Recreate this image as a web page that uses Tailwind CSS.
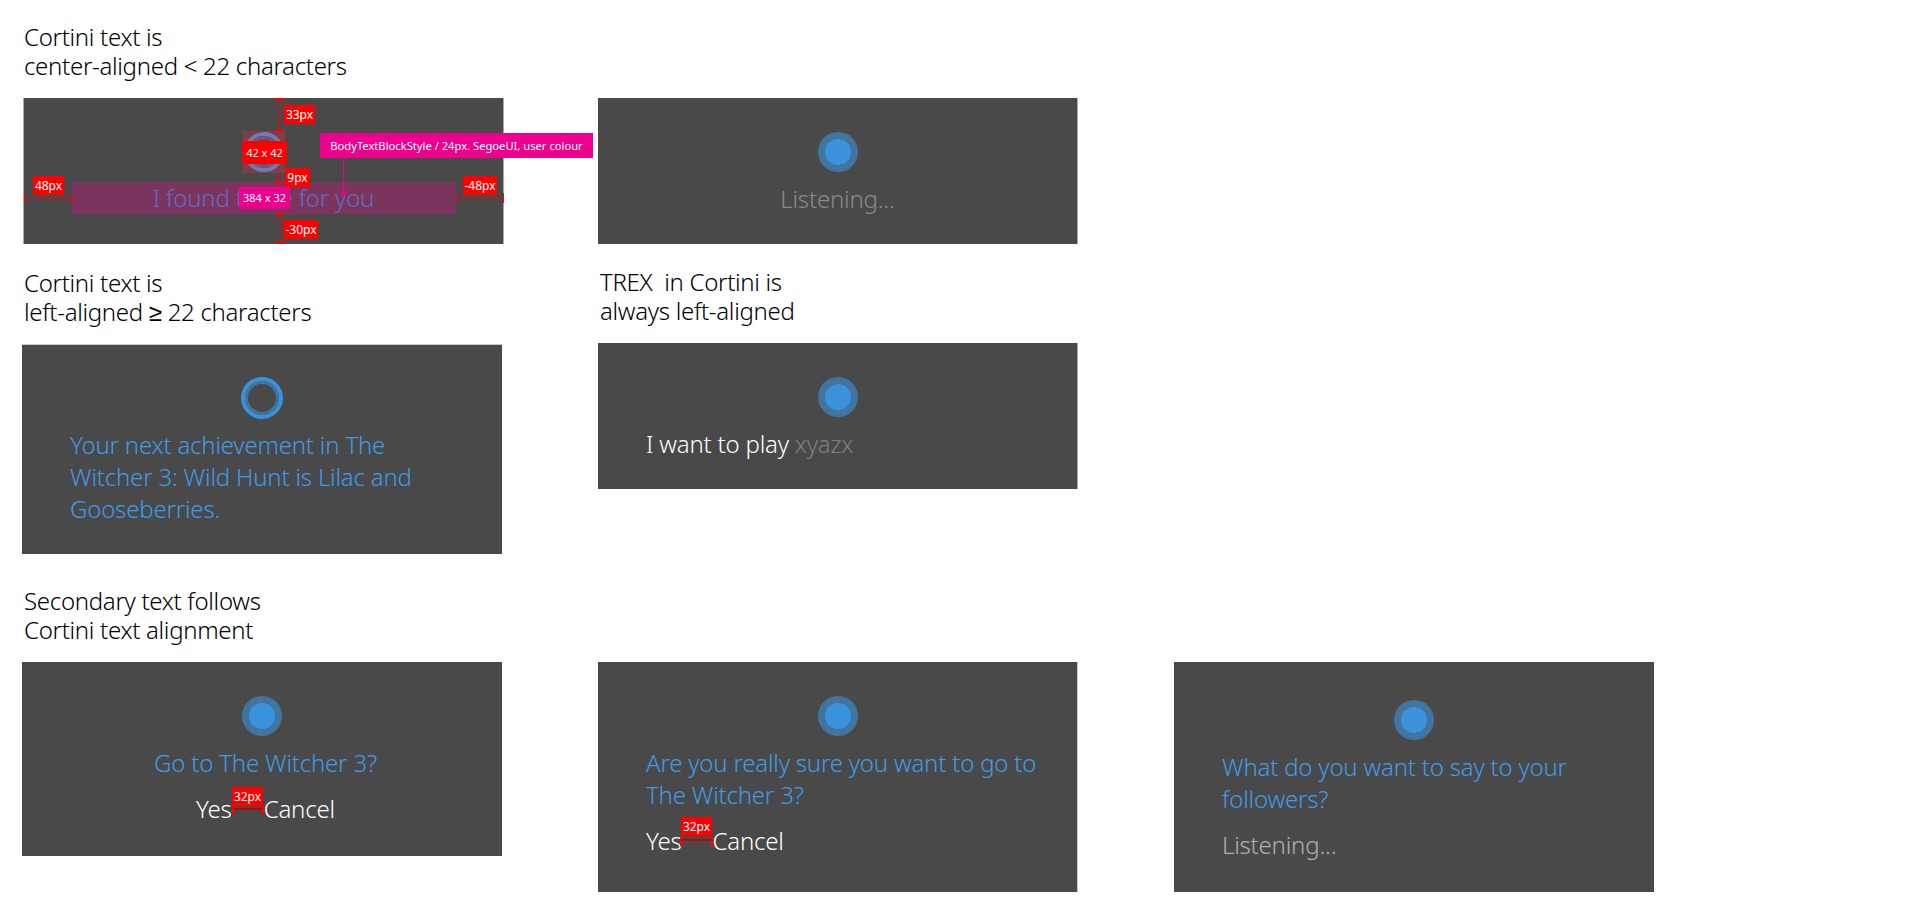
<!DOCTYPE html>
<html lang="en">
<head>
  <meta charset="UTF-8" />
  <title>Cortini text alignment</title>
  <script src="https://cdn.jsdelivr.net/npm/@tailwindcss/browser@4"></script>
</head>
<body class="bg-white font-['Noto_Sans',sans-serif] text-[24px] leading-8 tracking-[-0.2px] text-black overflow-hidden">
  <div class="grid grid-cols-[480px_480px_480px] gap-x-[96px] pl-[22px] pt-[22px]">

    <!-- Row 1 -->
    <h2 class="ml-0.5 mb-[18px] text-[24px] leading-[29px] tracking-[-0.3px] font-light">Cortini text is<br />center-aligned &lt; 22 characters</h2>
    <div></div>
    <div></div>

    <div class="relative ml-px h-[146px] w-[481px] bg-[#494949] border-x border-[#a8a8a8] pt-[33px] text-center">
      <div class="relative mx-auto h-[42px] w-[42px] bg-[#7d3f47] p-px">
        <div class="h-full w-full rounded-full border-4 border-[#7478b0]">
          <div class="h-full w-full rounded-full border-[3px] border-[#6a5a85]"></div>
        </div>
      </div>
      <p class="mx-auto mt-[9px] h-8 w-[384px] bg-[#7b345c] font-light text-[#5f6bc8]">I found three for you</p>

      <!-- Redline overlays -->
      <div class="absolute left-[218px] top-[43px] flex h-[23px] w-[45px] items-center justify-center bg-[#ff0000] text-[11px] tracking-normal text-white">42 x 42</div>
      <div class="absolute left-[215px] top-[89px] flex h-[22px] w-[51px] items-center justify-center bg-[#ec008c] text-[11px] tracking-normal text-white">384 x 32</div>

      <div class="absolute left-[255px] top-0 h-[33px] w-px bg-[#ff0000]"></div>
      <div class="absolute left-[250px] top-0 h-0.5 w-[10px] bg-[#ff0000]"></div>
      <div class="absolute left-[250px] top-[32px] h-0.5 w-[10px] bg-[#ff0000]"></div>
      <div class="absolute left-[260px] top-[7px] flex h-[19px] w-[31px] items-center justify-center bg-[#ff0000] text-[12px] tracking-normal text-white">33px</div>

      <div class="absolute left-[255px] top-[75px] h-[9px] w-px bg-[#ff0000]"></div>
      <div class="absolute left-[250px] top-[83px] h-0.5 w-[10px] bg-[#ff0000]"></div>
      <div class="absolute left-[261px] top-[70px] flex h-[19px] w-[25px] items-center justify-center bg-[#ff0000] text-[12px] tracking-normal text-white">9px</div>

      <div class="absolute left-[256px] top-[115px] h-[31px] w-px bg-[#ff0000]"></div>
      <div class="absolute left-[251px] top-[115px] h-0.5 w-[10px] bg-[#ff0000]"></div>
      <div class="absolute left-[251px] top-[144px] h-0.5 w-[10px] bg-[#ff0000]"></div>
      <div class="absolute left-[260px] top-[122px] flex h-[19px] w-[34px] items-center justify-center bg-[#ff0000] text-[12px] tracking-normal text-white">-30px</div>

      <div class="absolute left-0 top-[100px] w-[47px] border-t border-dashed border-[#ff0000]"></div>
      <div class="absolute left-0 top-[95px] h-[10px] w-px bg-[#ff0000]"></div>
      <div class="absolute left-[47px] top-[95px] h-[10px] w-px bg-[#ff0000]"></div>
      <div class="absolute left-[9px] top-[78px] flex h-[19px] w-[31px] items-center justify-center bg-[#ff0000] text-[12px] tracking-normal text-white">48px</div>

      <div class="absolute left-[432px] top-[100px] w-[47px] border-t border-dashed border-[#ff0000]"></div>
      <div class="absolute left-[432px] top-[95px] h-[10px] w-px bg-[#ff0000]"></div>
      <div class="absolute left-[479px] top-[95px] h-[10px] w-px bg-[#ff0000]"></div>
      <div class="absolute left-[439px] top-[78px] flex h-[19px] w-[34px] items-center justify-center bg-[#ff0000] text-[12px] tracking-normal text-white">-48px</div>

      <div class="absolute left-[296px] top-[35px] flex h-[25px] w-[273px] items-center justify-center bg-[#ec008c] text-[11.2px] tracking-normal text-white">BodyTextBlockStyle / 24px. SegoeUI, user colour</div>
      <div class="absolute left-[319px] top-[60px] h-[36px] w-px bg-[#ec008c]"></div>
      <div class="absolute left-[317px] top-[93px] h-[5px] w-[5px] rounded-full bg-[#ec008c]"></div>
    </div>

    <div class="h-[146px] bg-[#494949] border-r border-[#a8a8a8] pt-[34px] text-center">
      <div class="mx-auto h-10 w-10 rounded-full bg-[#41759f] p-[7px]">
        <div class="h-full w-full rounded-full bg-[#3a92dc]"></div>
      </div>
      <p class="mt-[11px] font-light text-[#8a8a8a]">Listening...</p>
    </div>
    <div></div>

    <!-- Row 2 -->
    <h2 class="ml-0.5 mt-6 mb-[18px] text-[24px] leading-[29px] tracking-[-0.3px] font-light">Cortini text is<br />left-aligned ≥ 22 characters</h2>
    <h2 class="ml-0.5 mt-[23px] mb-[18px] text-[24px] leading-[29px] tracking-[-0.3px] font-light">TREX&nbsp; in Cortini is<br />always left-aligned</h2>
    <div></div>

    <div class="h-[210px] bg-[#494949] border-t border-[#c8c8c8] pt-[32px] pl-[48px] pr-[48px]">
      <div class="mx-auto h-[42px] w-[42px] rounded-full border-4 border-[#3a92dc]">
        <div class="h-full w-full rounded-full border-[3px] border-[#41759f]"></div>
      </div>
      <p class="mt-[10px] font-light text-[#3f9be8]">Your next achievement in The<br />Witcher 3: Wild Hunt is Lilac and<br />Gooseberries.</p>
    </div>

    <div class="-mt-px h-[146px] bg-[#494949] border-r border-[#a8a8a8] pt-[34px] pl-[48px]">
      <div class="ml-[172px] h-10 w-10 rounded-full bg-[#41759f] p-[7px]">
        <div class="h-full w-full rounded-full bg-[#3a92dc]"></div>
      </div>
      <p class="mt-[11px] font-light text-white">I want to play <span class="text-[#7f7f7f]">xyazx</span></p>
    </div>
    <div></div>

    <!-- Row 3 -->
    <h2 class="col-span-3 ml-0.5 mt-8 mb-[18px] text-[24px] leading-[29px] tracking-[-0.3px] font-light">Secondary text follows<br />Cortini text alignment</h2>

    <div class="h-[194px] bg-[#494949] pt-[34px] text-center">
      <div class="mx-auto h-10 w-10 rounded-full bg-[#41759f] p-[7px]">
        <div class="h-full w-full rounded-full bg-[#3a92dc]"></div>
      </div>
      <p class="mt-[11px] pl-[7px] font-light text-[#3f9be8]">Go to The Witcher 3?</p>
      <div class="relative mt-[14px] flex justify-center gap-8 pl-[7px] font-light text-white">
        <span>Yes</span><span>Cancel</span>
        <div class="absolute left-[210px] top-[-6px] flex h-[19px] w-[31px] items-center justify-center bg-[#ff0000] text-[12px] tracking-normal font-normal">32px</div>
        <div class="absolute left-[210px] top-[15px] h-0.5 w-[31px] bg-[#c80000]"></div>
        <div class="absolute left-[210px] top-[13px] h-[9px] w-0.5 bg-[#ff0000]"></div>
        <div class="absolute left-[240px] top-[13px] h-[9px] w-0.5 bg-[#ff0000]"></div>
      </div>
    </div>

    <div class="h-[230px] bg-[#494949] border-r border-[#c8c8c8] pt-[34px] pl-[48px]">
      <div class="ml-[172px] h-10 w-10 rounded-full bg-[#41759f] p-[7px]">
        <div class="h-full w-full rounded-full bg-[#3a92dc]"></div>
      </div>
      <p class="mt-[11px] font-light text-[#3f9be8]">Are you really sure you want to go to<br />The Witcher 3?</p>
      <div class="relative mt-[14px] flex gap-[31px] font-light text-white">
        <span>Yes</span><span>Cancel</span>
        <div class="absolute left-[35px] top-[-8px] flex h-[19px] w-[31px] items-center justify-center bg-[#ff0000] text-[12px] tracking-normal font-normal">32px</div>
        <div class="absolute left-[34px] top-[14px] h-0.5 w-[33px] bg-[#c80000]"></div>
        <div class="absolute left-[34px] top-[12px] h-[9px] w-0.5 bg-[#ff0000]"></div>
        <div class="absolute left-[65px] top-[12px] h-[9px] w-0.5 bg-[#ff0000]"></div>
      </div>
    </div>

    <div class="h-[230px] bg-[#494949] pt-[38px] pl-[48px]">
      <div class="ml-[172px] h-10 w-10 rounded-full bg-[#41759f] p-[7px]">
        <div class="h-full w-full rounded-full bg-[#3a92dc]"></div>
      </div>
      <p class="mt-[11px] font-light text-[#3f9be8]">What do you want to say to your<br />followers?</p>
      <p class="mt-[14px] font-light text-[#b0b0b0]">Listening...</p>
    </div>
  </div>
</body>
</html>
